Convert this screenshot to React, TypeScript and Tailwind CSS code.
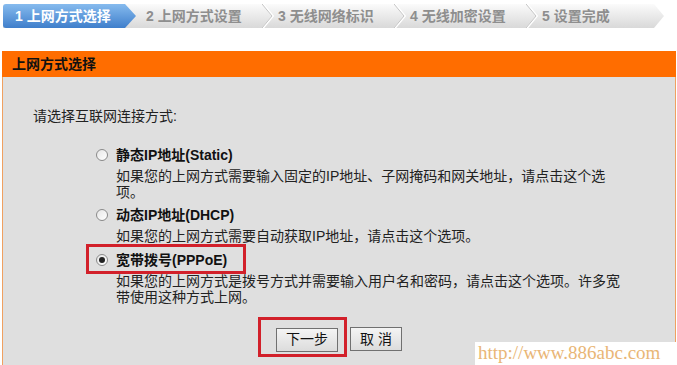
import React from 'react';

const font = { fontFamily: '"Liberation Sans", "Noto Sans CJK SC", sans-serif' };

const steps = ['2 上网方式设置', '3 无线网络标识', '4 无线加密设置', '5 设置完成'];

const Chevron = () => (
  <svg className="absolute right-[-6px] top-0 h-[24px] w-[12px]" viewBox="0 0 12 24">
    <polyline points="1,0 11,12 1,24" fill="none" stroke="#ffffff" strokeWidth="2" />
    <polyline points="0,0 10,12 0,24" fill="none" stroke="#c4c4c4" strokeWidth="1" />
  </svg>
);

const Radio = ({ checked }: { checked?: boolean }) => (
  <span className="flex h-[12px] w-[12px] shrink-0 items-center justify-center rounded-full border border-[#8a8a8a] bg-gradient-to-br from-[#e6e6e6] to-white">
    {checked && <span className="h-[6px] w-[6px] rounded-full bg-[#222]" />}
  </span>
);

const Option = ({
  title,
  desc,
  checked,
  boxed,
  className,
}: {
  title: string;
  desc: string;
  checked?: boolean;
  boxed?: boolean;
  className?: string;
}) => (
  <div className={className}>
    <div className="relative flex h-[20px] items-center gap-[8px]">
      <Radio checked={checked} />
      <span className="text-[14px] font-bold text-[#111]">{title}</span>
      {boxed && (
        <span className="absolute left-[-10px] top-[-6px] h-[30px] w-[160px] border-[3px] border-[#d2202a]" />
      )}
    </div>
    <p className="ml-[20px] mt-[3px] w-[507px] text-[14px] leading-[16px] text-[#222]">{desc}</p>
  </div>
);

export default function App() {
  return (
    <div className="relative h-[365px] w-[677px] overflow-hidden bg-white" style={font}>
      {/* step bar */}
      <div
        className="ml-[3px] mt-[4px] flex h-[24px] w-[661px] bg-gradient-to-b from-[#fbfbfb] to-[#d9d9d9]"
        style={{ clipPath: 'polygon(0 0, calc(100% - 10px) 0, 100% 50%, calc(100% - 10px) 100%, 0 100%)' }}
      >
        <div
          className="flex w-[133px] shrink-0 items-center rounded-l-[3px] bg-gradient-to-b from-[#86bbee] to-[#3f7fcb] pl-[12px] text-[14px] font-bold text-white"
          style={{ clipPath: 'polygon(0 0, calc(100% - 11px) 0, 100% 50%, calc(100% - 11px) 100%, 0 100%)' }}
        >
          1 上网方式选择
        </div>
        {steps.map((s, i) => (
          <div
            key={s}
            className="relative flex w-[132px] shrink-0 items-center pl-[10px] text-[14px] font-bold text-[#8e8e8e]"
          >
            {s}
            {i < steps.length - 1 && <Chevron />}
          </div>
        ))}
      </div>

      {/* panel */}
      <div className="mx-[2px] mt-[23px] w-[674px]">
        <div className="flex h-[26px] items-center bg-[#ff6d00] pl-[10px] text-[14px] font-bold text-[#111]">
          上网方式选择
        </div>
        <div className="h-[300px] border-x border-[#f0a060] bg-[#dfdfdf] pt-[31px]">
          <p className="pl-[30px] text-[14px] leading-[16px] text-[#222]">请选择互联网连接方式:</p>
          <div className="pl-[93px]">
            <Option
              className="mt-[21px]"
              title="静态IP地址(Static)"
              desc="如果您的上网方式需要输入固定的IP地址、子网掩码和网关地址，请点击这个选项。"
            />
            <Option
              className="mt-[5px]"
              title="动态IP地址(DHCP)"
              desc="如果您的上网方式需要自动获取IP地址，请点击这个选项。"
            />
            <Option
              className="mt-[6px]"
              title="宽带拨号(PPPoE)"
              checked
              boxed
              desc="如果您的上网方式是拨号方式并需要输入用户名和密码，请点击这个选项。许多宽带使用这种方式上网。"
            />
          </div>
          <div className="mt-[22px] flex justify-center gap-[12px]">
            <div className="relative">
              <button className="h-[24px] w-[62px] border border-[#707070] bg-gradient-to-b from-[#f4f4f4] to-[#dcdcdc] text-[14px] text-[#111]">
                下一步
              </button>
              <span className="pointer-events-none absolute left-[-18px] top-[-10px] h-[40px] w-[89px] border-[3px] border-[#d2202a]" />
            </div>
            <button className="h-[24px] w-[52px] border border-[#707070] bg-gradient-to-b from-[#f4f4f4] to-[#dcdcdc] text-[14px] text-[#111]">
              取 消
            </button>
          </div>
        </div>
      </div>

      {/* watermark */}
      <div
        className="absolute bottom-0 right-0 flex h-[23px] w-[202px] items-center bg-white pl-[3px] text-[19px] text-[#e9b676]"
        style={{ fontFamily: '"Liberation Serif", serif' }}
      >
        http://www.886abc.com
      </div>
    </div>
  );
}
